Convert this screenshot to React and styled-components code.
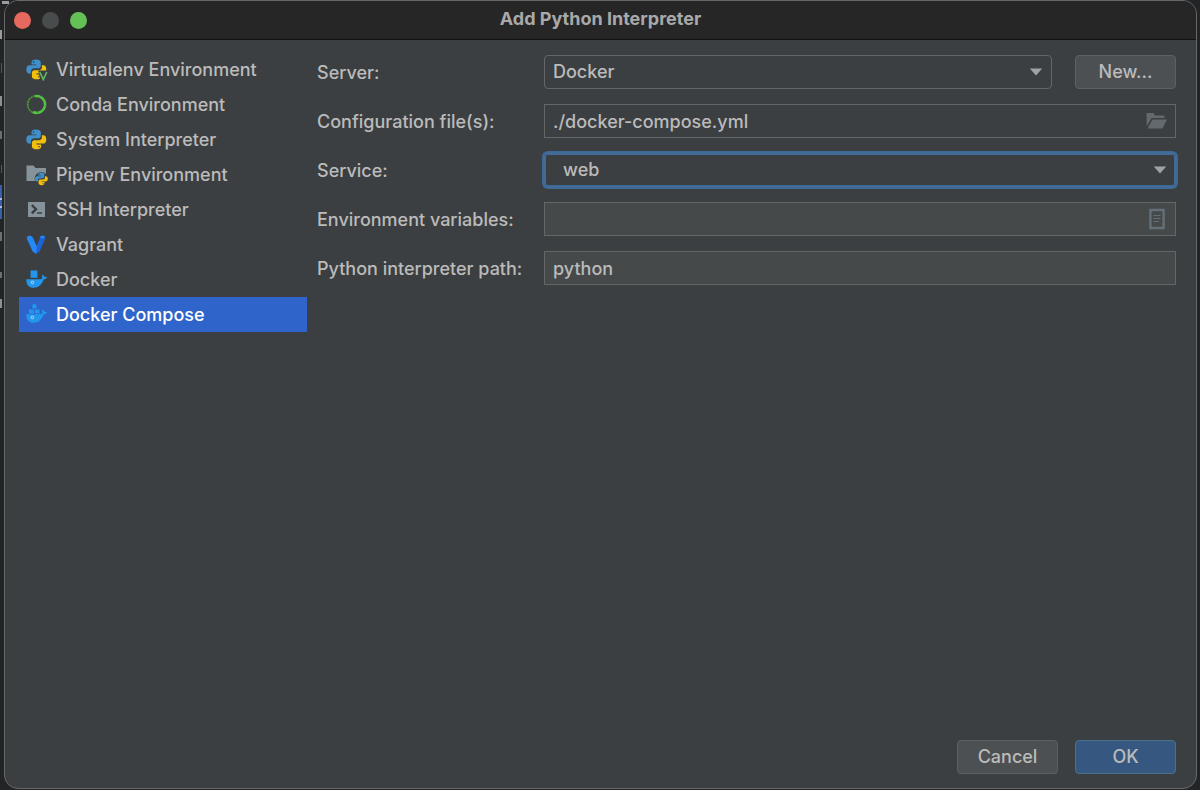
import React, { useState } from "react";
import styled, { createGlobalStyle, css } from "styled-components";

const GlobalStyle = createGlobalStyle`
  *, *::before, *::after { box-sizing: border-box; }
  html, body, #root { height: 100%; }
  body {
    margin: 0;
    color: #bbbbbb;
    background: #232425;
    font-family: Inter, "Liberation Sans", sans-serif;
    font-size: 18px;
    font-weight: 500;
    line-height: 24px;
  }
  button, input, select { font: inherit; color: inherit; }
`;

// the editor window that shows behind the dialog's edges
const Desktop = styled.div`
  min-height: 100%;
  padding: 0 3px 1px 4px;
  display: flex;
  background:
    linear-gradient(#9a9b9c, #9a9b9c) 2px 1px / 7px 3px no-repeat,
    linear-gradient(#9a9b9c, #9a9b9c) 0 30px / 2px 9px no-repeat,
    linear-gradient(#55585a, #55585a) 1px 63px / 1px 10px no-repeat,
    linear-gradient(#8d8f90, #8d8f90) 0 96px / 2px 10px no-repeat,
    linear-gradient(#6d6f70, #6d6f70) 0 131px / 2px 8px no-repeat,
    linear-gradient(#55585a, #55585a) 1px 165px / 1px 8px no-repeat,
    linear-gradient(#a9bfe4, #a9bfe4) 0 198px / 2px 2px no-repeat,
    linear-gradient(#a9bfe4, #a9bfe4) 0 206px / 2px 2px no-repeat,
    linear-gradient(#3461a8, #3461a8) 0 185px / 2px 34px no-repeat,
    linear-gradient(#6d6f70, #6d6f70) 0 232px / 2px 9px no-repeat,
    linear-gradient(#6d6f70, #6d6f70) 0 272px / 2px 6px no-repeat,
    linear-gradient(#8d8f90, #8d8f90) 0 299px / 2px 9px no-repeat,
    #232425;
`;

const Dialog = styled.main`
  flex: 1;
  display: flex;
  flex-direction: column;
  overflow: hidden;
  background: #3c3f41;
  border: 1px solid #66696a;
  border-radius: 14px;
`;

const TitleBar = styled.header`
  display: grid;
  grid-template-columns: 1fr auto 1fr;
  align-items: center;
  height: 39px;
  padding: 0 9px;
  background: #262626;
  border-bottom: 1px solid #121212;
`;

const Title = styled.h1`
  margin: 0;
  padding-bottom: 2px;
  font-size: 18px;
  font-weight: 700;
  color: #a9a9a9;
`;

const WindowButtons = styled.div`
  display: flex;
  gap: 11px;
`;

const WindowButton = styled.button`
  width: 17px;
  height: 17px;
  padding: 0;
  border: 0;
  border-radius: 50%;
  background: ${(p) => p.$color};
`;

const Content = styled.div`
  flex: 1;
  display: flex;
  gap: 10px;
  padding: 12px 20px 0 14px;
`;

const Sidebar = styled.nav`
  flex: 0 0 288px;
  display: flex;
  flex-direction: column;
`;

const SidebarItem = styled.button`
  display: flex;
  align-items: center;
  gap: 8px;
  height: 35px;
  padding: 0 7px;
  border: 0;
  text-align: left;
  white-space: nowrap;
  background: ${(p) => (p.$active ? "#2f65ca" : "transparent")};
  color: ${(p) => (p.$active ? "#ffffff" : "#bbbbbb")};

  svg {
    flex: none;
  }
`;

const Form = styled.form`
  flex: 1;
  display: grid;
  grid-template-columns: 209px 1fr;
  align-content: start;
  align-items: center;
  column-gap: 18px;
  row-gap: 15px;
  padding-top: 3px;
`;

const Label = styled.label`
  padding-top: 1px;
  white-space: nowrap;
`;

const ServerRow = styled.div`
  display: flex;
  gap: 23px;
`;

const SelectBox = styled.div`
  position: relative;
  flex: 1;
  display: flex;

  svg {
    position: absolute;
    right: 9px;
    top: 13px;
    pointer-events: none;
  }
`;

const Select = styled.select`
  appearance: none;
  flex: 1;
  height: 34px;
  padding: 0 30px 0 ${(p) => (p.$inset ? "18px" : "8px")};
  background: #3c3f41;
  border: 1px solid #646667;
  border-radius: 4px;
  outline: none;

  ${(p) =>
    p.$focused &&
    css`
      border-color: #466d94;
      box-shadow: 0 0 0 2px #3d6a99, inset 0 0 0 1px #3d6a99;
    `}
`;

const TextBox = styled.div`
  display: flex;
  align-items: center;
  height: 34px;
  background: ${(p) => (p.$readOnly ? "#3c3f41" : "#45494a")};
  border: 1px solid #646667;
`;

const TextInput = styled.input`
  flex: 1;
  min-width: 0;
  height: 100%;
  padding: 0 8px;
  background: none;
  border: 0;
  outline: none;
`;

const IconButton = styled.button`
  display: flex;
  padding: 0 7px;
  background: none;
  border: 0;
`;

const Button = styled.button`
  width: 101px;
  height: 34px;
  padding: 0;
  border-radius: 4px;
  border: 1px solid ${(p) => (p.$primary ? "#4c708c" : "#5e6060")};
  background: ${(p) => (p.$primary ? "#365880" : "#4c5052")};
`;

const Footer = styled.footer`
  display: flex;
  justify-content: flex-end;
  gap: 17px;
  padding: 0 20px 14px;
`;

const PythonLogo = () => (
  <>
    <path
      fill="#3f8fc9"
      d="M9.9 0.5C6.8 0.5 5.5 1.6 5.5 3.4V5.4H10.3V6.2H3.4C1.5 6.2 0.3 7.8 0.3 10.4C0.3 13 1.5 14.6 3.2 14.6H5V12.2C5 10.4 6.4 9.3 8 9.3H12.2C13.7 9.3 14.8 8.2 14.8 6.7V3.4C14.8 1.6 13 0.5 9.9 0.5ZM7.6 2.3A0.8 0.8 0 1 1 7.6 3.9A0.8 0.8 0 0 1 7.6 2.3Z"
    />
    <path
      fill="#f2bf0c"
      d="M10.7 20.3C13.8 20.3 15.1 19.2 15.1 17.4V15.4H10.3V14.6H17.2C19.1 14.6 20.3 13 20.3 10.4C20.3 7.8 19.1 6.2 17.4 6.2H15.9V8.6C15.9 10.4 14.5 11.3 12.9 11.3H8.4C6.9 11.3 5.9 12.5 5.9 14V17.4C5.9 19.2 7.6 20.3 10.7 20.3ZM13 18.5A0.8 0.8 0 1 1 13 16.9A0.8 0.8 0 0 1 13 18.5Z"
    />
  </>
);

const PythonIcon = () => (
  <svg width="22" height="22" viewBox="0 0 22 22">
    <PythonLogo />
  </svg>
);

const VirtualenvIcon = () => (
  <svg width="22" height="22" viewBox="0 0 22 22">
    <PythonLogo />
    <path d="M12.2 11.5H22V22H14.6Z" fill="#3c3f41" />
    <path d="M13.8 13L17.3 20.6L20.8 13" fill="none" stroke="#5fb865" strokeWidth="1.6" />
  </svg>
);

const CondaIcon = () => (
  <svg width="22" height="22" viewBox="0 0 22 22" fill="none">
    <circle cx="10.5" cy="10.5" r="8.8" stroke="#43a02e" strokeWidth="1.6" strokeDasharray="2.4 0.5" />
    <path d="M9 2.2A8.4 8.4 0 1 1 7 18" stroke="#56c046" strokeWidth="2.6" strokeDasharray="5 0.4" />
  </svg>
);

const PipenvIcon = () => (
  <svg width="22" height="22" viewBox="0 0 22 22">
    <path d="M0.5 1.5H7.5L9.5 4H20V17H0.5Z" fill="#87939a" />
    <circle cx="15.2" cy="14.6" r="6.6" fill="#3c3f41" />
    <g transform="translate(8.8 8.2) scale(0.64)">
      <PythonLogo />
    </g>
  </svg>
);

const SshIcon = () => (
  <svg width="22" height="22" viewBox="0 0 22 22">
    <path d="M2 3H19V18H2Z" fill="#87939a" />
    <path d="M5.8 6L10 10.2L5.8 14.4" fill="none" stroke="#3c3f41" strokeWidth="2.4" />
    <path d="M11 14H16" stroke="#3c3f41" strokeWidth="1.4" />
  </svg>
);

const VagrantIcon = () => (
  <svg width="22" height="22" viewBox="0 0 22 22">
    <path d="M19 2L19 5L13.5 17.6L10.2 20L8.5 16L14.4 3.5L16 2Z" fill="#1d62d6" />
    <path d="M1 2.6L4.4 1.5L6.6 3L10.8 12.6L10.2 20L6.6 17.2L1 5Z" fill="#2489f6" />
    <path d="M13.5 3.2L16 1.5L19.4 2.6L16 4.4Z" fill="#2489f6" />
  </svg>
);

const DockerWhale = () => (
  <>
    <path
      fill="#2396ed"
      d="M0.3 10.2H14.6C15.9 10.2 16.4 9.4 16.4 8.3C15.7 7.2 15.9 6.2 16.7 5.4C17.7 6.1 18.1 6.9 18.1 7.8C19.1 7.6 20.2 7.7 20.9 8.2C20.3 9.6 19.2 10.2 17.6 10.3C16.1 15.7 12.4 18.8 7.6 18.8C3 18.8 0.2 15.8 0.3 10.2Z"
    />
    <circle cx="6.4" cy="13.4" r="1.3" fill="none" stroke="#c9e0f2" strokeWidth="0.9" />
  </>
);

const DockerIcon = () => (
  <svg width="22" height="22" viewBox="0 0 22 22">
    <path d="M4.6 1.5H11.4V8.8H4.6Z" fill="#2396ed" />
    <DockerWhale />
  </svg>
);

const DockerComposeIcon = () => (
  <svg width="22" height="22" viewBox="0 0 22 22">
    <circle cx="8.4" cy="2.4" r="2.3" fill="#2396ed" />
    <path d="M3 5.6H7.8V9.4H3ZM8.8 5.6H13.6V9.4H8.8Z" fill="#2396ed" />
    <DockerWhale />
  </svg>
);

const ArrowIcon = () => (
  <svg width="14" height="8" viewBox="0 0 14 8">
    <path d="M0.8 0.5H13.2L7 7.6Z" fill="#a0a3a5" />
  </svg>
);

const FolderIcon = () => (
  <svg width="22" height="18" viewBox="0 0 22 18">
    <path d="M0.6 1H7.4L9 3.6H18.4V6H5.6L0.6 14.6Z" fill="#626a6e" />
    <path d="M6.4 7.4H21L16.4 16.4H1.6Z" fill="#626a6e" />
  </svg>
);

const ListIcon = () => (
  <svg width="22" height="22" viewBox="0 0 22 22" fill="none" stroke="#647078">
    <path d="M4.4 2H17.6V20H4.4Z" strokeWidth="2.4" />
    <path d="M7.4 7.5H14.6M7.4 10.5H14.6M7.4 13.5H13" strokeWidth="1.2" />
  </svg>
);

const environments = [
  { name: "Virtualenv Environment", Icon: VirtualenvIcon },
  { name: "Conda Environment", Icon: CondaIcon },
  { name: "System Interpreter", Icon: PythonIcon },
  { name: "Pipenv Environment", Icon: PipenvIcon },
  { name: "SSH Interpreter", Icon: SshIcon },
  { name: "Vagrant", Icon: VagrantIcon },
  { name: "Docker", Icon: DockerIcon },
  { name: "Docker Compose", Icon: DockerComposeIcon },
];

const App = () => {
  const [active, setActive] = useState("Docker Compose");
  const [variables, setVariables] = useState("");
  const [path, setPath] = useState("python");

  return (
    <>
      <GlobalStyle />
      <Desktop>
        <Dialog>
          <TitleBar>
            <WindowButtons>
              <WindowButton $color="#e5695e" aria-label="Close" />
              <WindowButton $color="#494c4d" aria-label="Minimize" disabled />
              <WindowButton $color="#63c155" aria-label="Zoom" />
            </WindowButtons>
            <Title>Add Python Interpreter</Title>
          </TitleBar>

          <Content>
            <Sidebar>
              {environments.map(({ name, Icon }) => (
                <SidebarItem
                  key={name}
                  $active={name === active}
                  onClick={() => setActive(name)}
                >
                  <Icon />
                  {name}
                </SidebarItem>
              ))}
            </Sidebar>

            <Form id="interpreter" onSubmit={(e) => e.preventDefault()}>
              <Label htmlFor="server">Server:</Label>
              <ServerRow>
                <SelectBox>
                  <Select id="server">
                    <option>Docker</option>
                  </Select>
                  <ArrowIcon />
                </SelectBox>
                <Button type="button">New...</Button>
              </ServerRow>

              <Label htmlFor="config">Configuration file(s):</Label>
              <TextBox $readOnly>
                <TextInput id="config" value="./docker-compose.yml" readOnly />
                <IconButton type="button" aria-label="Browse">
                  <FolderIcon />
                </IconButton>
              </TextBox>

              <Label htmlFor="service">Service:</Label>
              <SelectBox>
                <Select id="service" $inset $focused>
                  <option>web</option>
                </Select>
                <ArrowIcon />
              </SelectBox>

              <Label htmlFor="variables">Environment variables:</Label>
              <TextBox>
                <TextInput
                  id="variables"
                  value={variables}
                  onChange={(e) => setVariables(e.target.value)}
                />
                <IconButton type="button" aria-label="Edit variables">
                  <ListIcon />
                </IconButton>
              </TextBox>

              <Label htmlFor="path">Python interpreter path:</Label>
              <TextBox>
                <TextInput
                  id="path"
                  value={path}
                  onChange={(e) => setPath(e.target.value)}
                />
              </TextBox>
            </Form>
          </Content>

          <Footer>
            <Button type="button">Cancel</Button>
            <Button type="submit" form="interpreter" $primary>
              OK
            </Button>
          </Footer>
        </Dialog>
      </Desktop>
    </>
  );
};

export default App;
